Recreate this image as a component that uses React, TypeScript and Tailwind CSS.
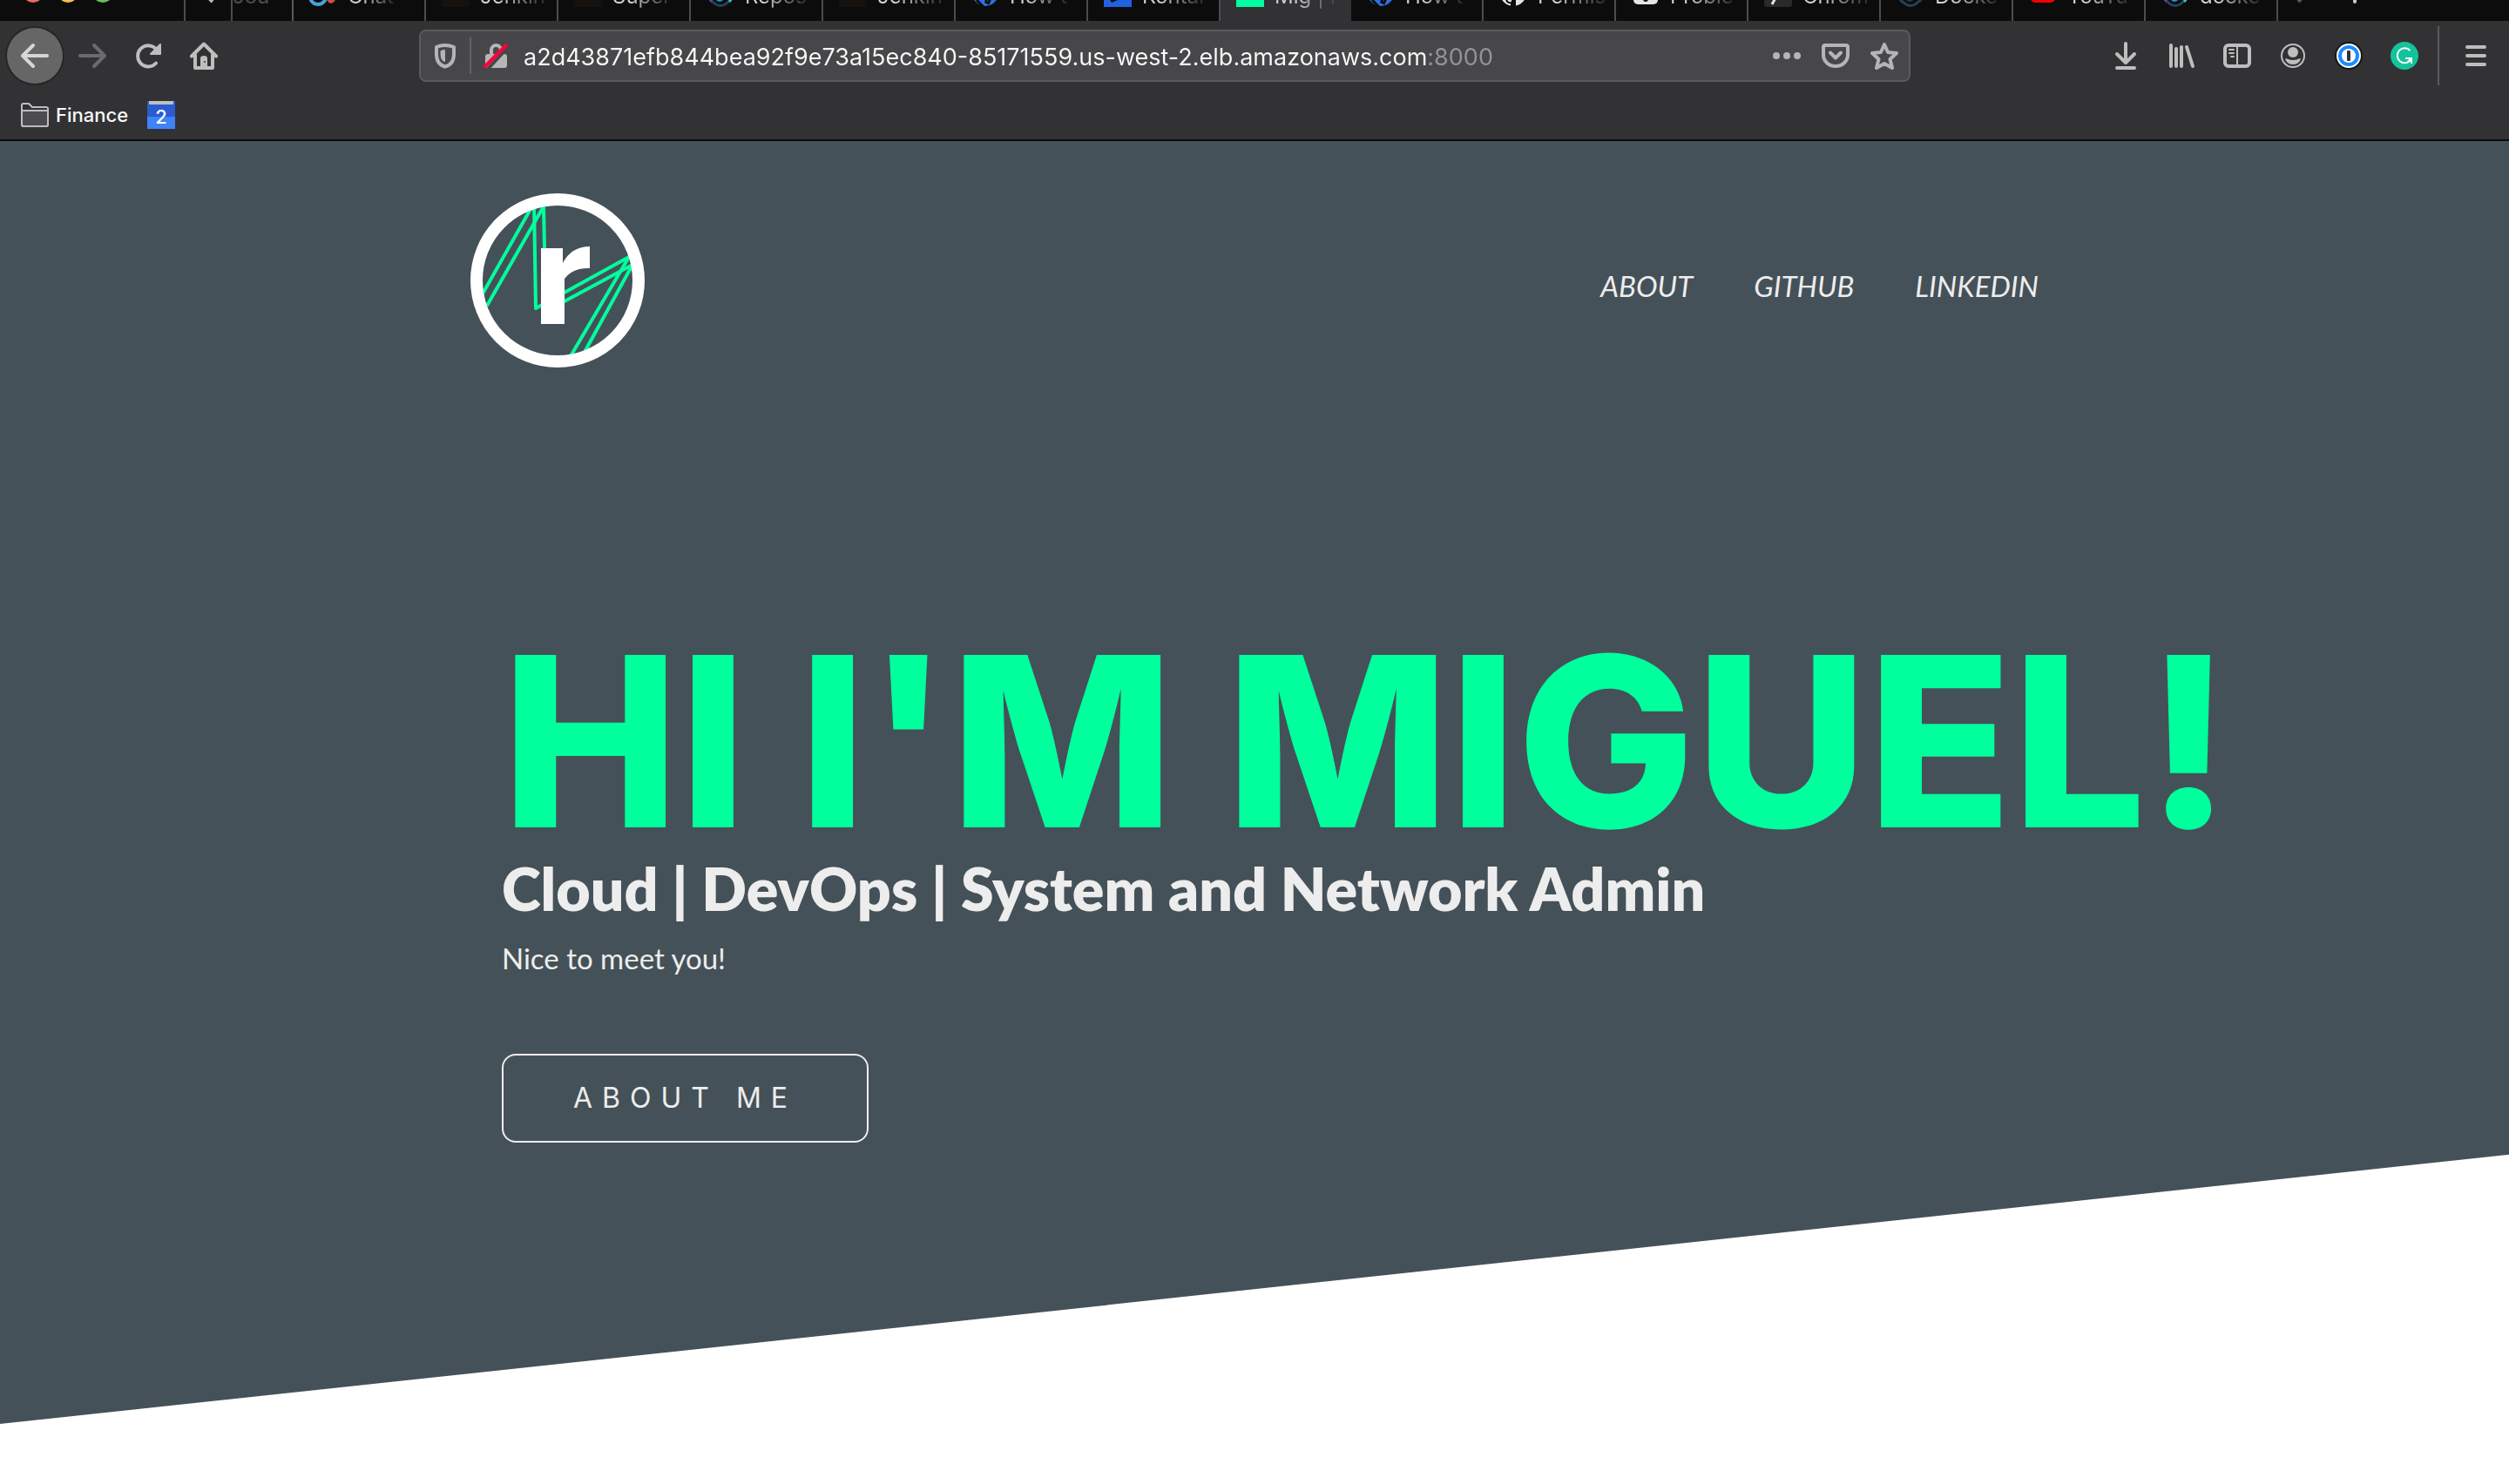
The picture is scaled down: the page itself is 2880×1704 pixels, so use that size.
import type { ReactNode } from "react";

const ring = (a: string, b: string, c: string) => (
  <svg viewBox="0 0 32 32" className="size-8" fill="none" strokeWidth="3">
    <path d="M16 2A14 14 0 0 0 7 26.700" stroke={a} />
    <path d="M6 25Q16 36 26 25" stroke={b} />
    <path d="M16 2A14 14 0 0 1 26 26" stroke={c} />
    <circle cx="15" cy="21" r="5" fill={a === b ? "#1d3a5c" : "#1397d5"} />
  </svg>
);

const kube = (
  <svg viewBox="0 0 32 32" className="size-8">
    <circle cx="16" cy="16" r="15" fill="#2b72e0" />
    <path d="M6 24l8 8M17 20v8M22 22l-3 7" stroke="#0c0c0d" strokeWidth="3" />
  </svg>
);

const jenkins = <span className="block size-8 bg-[#14110f]" />;

type Tab = { title: string; icon: ReactNode; active?: boolean };

const tabs: Tab[] = [
  {
    title: "Chat",
    icon: (
      <svg viewBox="0 0 32 32" className="size-8" fill="none">
        <circle cx="10" cy="20" r="9" stroke="#4aa3d8" strokeWidth="4" />
        <ellipse cx="25" cy="18" rx="6" ry="10" fill="#c94f40" />
      </svg>
    ),
  },
  { title: "Jenkin", icon: jenkins },
  { title: "Super", icon: jenkins },
  { title: "Repos", icon: ring("#6a44a8", "#274055", "#33c9c0") },
  { title: "Jenkin", icon: jenkins },
  { title: "How t", icon: kube },
  {
    title: "Kontai",
    icon: (
      <svg viewBox="0 0 32 32" className="size-8">
        <rect width="32" height="32" fill="#2262e0" />
        <path d="M4 18h26l-21 9z" fill="#0c0c0d" />
      </svg>
    ),
  },
  { title: "Mig | P", icon: <span className="block size-8 bg-[#00ffa2]" />, active: true },
  { title: "How t", icon: kube },
  {
    title: "Permis",
    icon: (
      <svg viewBox="0 0 32 32" className="size-8">
        <circle cx="16" cy="16" r="15" fill="#e4e4e4" />
        <path d="M14 32v-5q-4 1-6-3" stroke="#0c0c0d" strokeWidth="2" fill="none" />
        <path d="M14 20h5v12h-5z" fill="#0c0c0d" />
      </svg>
    ),
  },
  {
    title: "Proble",
    icon: (
      <svg viewBox="0 0 32 32" className="size-8">
        <rect x="2" y="4" width="28" height="25" rx="5" fill="#e4e4e4" />
        <circle cx="16" cy="23" r="3" fill="#0c0c0d" />
      </svg>
    ),
  },
  {
    title: "Chrom",
    icon: (
      <svg viewBox="0 0 32 32" className="size-8">
        <rect width="32" height="32" rx="3" fill="#2a2a2b" />
        <path d="M14 20l-5 9" stroke="#e4e4e4" strokeWidth="3" />
      </svg>
    ),
  },
  { title: "Docke", icon: ring("#274055", "#274055", "#274055") },
  {
    title: "YouTu",
    icon: (
      <svg viewBox="0 0 32 32" className="size-8">
        <rect x="2" y="5" width="28" height="22" rx="5" fill="#f00000" />
      </svg>
    ),
  },
  { title: "docke", icon: ring("#6a44a8", "#274055", "#33c9c0") },
];

function TabStrip() {
  return (
    <div className="flex h-6 items-stretch overflow-hidden bg-[#0c0c0d] text-[24px] leading-6 text-[#c8c8c8]">
      <div className="flex w-[211px] shrink-0 items-end gap-4 pb-[21px] pl-[26px]">
        <button aria-label="Close window" className="size-6 rounded-full bg-[#ee6a5f]" />
        <button aria-label="Minimize window" className="size-6 rounded-full bg-[#f5bf4f]" />
        <button aria-label="Zoom window" className="size-6 rounded-full bg-[#61c554]" />
      </div>
      <button aria-label="Scroll tabs left" className="flex w-14 shrink-0 items-end justify-center border-x-2 border-[#4c4c4e] pb-5">
        <svg viewBox="0 0 24 24" className="size-6" fill="none" stroke="#b8b8b8" strokeWidth="4">
          <path d="M17 2L7 12l10 10" />
        </svg>
      </button>
      <div className="flex w-[70px] shrink-0 items-end border-r-2 border-[#5a5a5c] pb-4 text-[#4c4c4e]">Jou</div>
      {tabs.map((t, i) => (
        <div
          key={i}
          className={
            t.active
              ? "flex w-[150px] shrink-0 items-end gap-3 bg-[#323234] pl-[18px]"
              : "flex w-[152px] shrink-0 items-end gap-3 border-r-2 border-[#4c4c4e] pl-[18px]"
          }
        >
          <span className="shrink-0 pb-4">{t.icon}</span>
          <span className="bg-linear-to-r from-[#d0d0d0] from-30% to-[#2a2a2b] bg-clip-text pb-4 whitespace-nowrap text-transparent">
            {t.title}
          </span>
        </div>
      ))}
      <div className="flex items-end gap-8 pb-5 pl-4">
        <button aria-label="Scroll tabs right">
          <svg viewBox="0 0 24 24" className="size-6" fill="none" stroke="#5a5a5c" strokeWidth="4">
            <path d="M7 2l10 10L7 22" />
          </svg>
        </button>
        <button aria-label="New tab">
          <svg viewBox="0 0 32 24" className="h-6 w-8" stroke="#c8c8c8" strokeWidth="4" strokeLinecap="round">
            <path d="M16 0v22M4 10h24" />
          </svg>
        </button>
      </div>
    </div>
  );
}

function ToolButton({ label, children }: { label: string; children: ReactNode }) {
  return (
    <button aria-label={label} className="flex h-16 w-16 shrink-0 items-center justify-center">
      {children}
    </button>
  );
}

function Icon({ children }: { children: ReactNode }) {
  return (
    <svg viewBox="0 0 32 32" className="size-8 shrink-0" fill="none" stroke="#bebebf" strokeWidth="4" strokeLinecap="round" strokeLinejoin="round">
      {children}
    </svg>
  );
}

function Toolbar() {
  return (
    <div className="flex h-20 items-center pr-1.5 pl-2">
      <button aria-label="Back" className="mr-0.5 flex size-16 shrink-0 items-center justify-center rounded-full bg-[#666667] ring-2 ring-[#262627]">
        <svg viewBox="0 0 32 32" className="size-8" fill="none" stroke="#d6d6d6" strokeWidth="4" strokeLinecap="round" strokeLinejoin="round">
          <path d="M30 16H3M14 4L2 16l12 12" />
        </svg>
      </button>
      <ToolButton label="Forward">
        <svg viewBox="0 0 32 32" className="size-8" fill="none" stroke="#6b6b6d" strokeWidth="4" strokeLinecap="round" strokeLinejoin="round">
          <path d="M2 16h27M18 4l12 12-12 12" />
        </svg>
      </ToolButton>
      <ToolButton label="Reload">
        <Icon>
          <path d="M25 24.500A12 12 0 1 1 26 9.500" />
          <path d="M30 3v11H19z" fill="#bebebf" strokeWidth="2" />
        </Icon>
      </ToolButton>
      <ToolButton label="Home">
        <Icon>
          <path d="M2 16.500L16 2.500l14 14M6 15v15h20V15" />
          <path d="M13 29V19q0-2 3-2t3 2v10" fill="#bebebf" strokeWidth="2" />
          <circle cx="17" cy="23" r="1" fill="#323234" stroke="none" />
        </Icon>
      </ToolButton>
      <div className="w-[215px] shrink-0" />
      <div className="flex h-[60px] flex-1 items-center rounded-lg border-2 border-[#5a5a5c] bg-[#474749]">
        <button aria-label="Tracking protection" className="ml-3 shrink-0">
          <svg viewBox="0 0 32 32" className="size-8" fill="none" stroke="#b5b5b7" strokeWidth="4" strokeLinejoin="round">
            <path d="M16 4q5 0 10 2v8c0 8-4 13-10 14.500C10 27 6 22 6 14V6q5-2 10-2z" />
            <path d="M15 10v12c-3-2-3.500-4-3.500-11z" fill="#b5b5b7" strokeWidth="2" />
          </svg>
        </button>
        <div className="ml-3 h-[42px] w-0.5 shrink-0 bg-[#5c646b]" />
        <button aria-label="Connection is not secure" className="ml-3 shrink-0">
          <svg viewBox="0 0 32 32" className="size-8" fill="none">
            <path d="M11 15V9.500a5.500 5.500 0 0 1 11 0V15" stroke="#b5b5b7" strokeWidth="4" />
            <rect x="4" y="14" width="25" height="16" rx="3" fill="#b5b5b7" />
            <path d="M7 31L32 4" stroke="#474749" strokeWidth="4" />
            <path d="M4 28L28 4" stroke="#ff0039" strokeWidth="4" strokeLinecap="round" />
          </svg>
        </button>
        <input
          aria-label="Address"
          defaultValue="a2d43871efb844bea92f9e73a15ec840-85171559.us-west-2.elb.amazonaws.com:8000"
          className="ml-4 h-14 min-w-0 flex-1 bg-[linear-gradient(90deg,#f9f9fa_1037px,#949496_1037px)] bg-clip-text pt-0.5 text-[27px] text-transparent outline-none"
        />
        <button aria-label="Page actions" className="flex w-14 shrink-0 justify-center">
          <svg viewBox="0 0 32 32" className="size-8" fill="#b5b5b7">
            <circle cx="4" cy="16" r="4" />
            <circle cx="16" cy="16" r="4" />
            <circle cx="28" cy="16" r="4" />
          </svg>
        </button>
        <button aria-label="Save to Pocket" className="flex w-14 shrink-0 justify-center">
          <svg viewBox="0 0 32 32" className="size-8" fill="none" stroke="#b5b5b7" strokeWidth="4" strokeLinecap="round" strokeLinejoin="round">
            <path d="M4 4h24q2 0 2 2v9a14 13 0 0 1-28 0V6q0-2 2-2z" />
            <path d="M10 12.500l6 6 6-6" />
          </svg>
        </button>
        <button aria-label="Bookmark this page" className="flex w-14 shrink-0 justify-center">
          <svg viewBox="0 0 32 32" className="size-8" fill="none" stroke="#b5b5b7" strokeWidth="4" strokeLinejoin="round">
            <path d="M16 3l4 9 10 1-7.500 7L25 30l-9-5-9 5 2.500-10L2 13l10-1z" />
          </svg>
        </button>
      </div>
      <div className="w-[215px] shrink-0" />
      <ToolButton label="Downloads">
        <Icon>
          <path d="M16 2v22M6 14l10 10 10-10M6 30h20" />
        </Icon>
      </ToolButton>
      <ToolButton label="Library">
        <Icon>
          <path d="M4 4v24M10 8v20M16 6v22M22 6l7 22" />
        </Icon>
      </ToolButton>
      <ToolButton label="Sidebars">
        <Icon>
          <rect x="2" y="4" width="28" height="24" rx="4" />
          <path d="M16 4v24M7 9h5M7 13h5M9 17h3" strokeWidth="2" />
        </Icon>
      </ToolButton>
      <ToolButton label="Account">
        <Icon>
          <circle cx="16" cy="16" r="13" strokeWidth="2" />
          <circle cx="16" cy="12" r="6" fill="#bebebf" stroke="none" />
          <path d="M8 19q8 4 16 0 1 0 0.500 2Q22 26 16 26T7.500 21Q7 19 8 19z" fill="#bebebf" stroke="none" />
        </Icon>
      </ToolButton>
      <ToolButton label="1Password">
        <svg viewBox="0 0 32 32" className="size-8">
          <circle cx="16" cy="16" r="16" fill="#161616" />
          <circle cx="16" cy="16" r="14" fill="#fff" />
          <circle cx="16" cy="16" r="12" fill="#1a8cff" />
          <circle cx="16" cy="16" r="8" fill="#fff" />
          <rect x="14" y="10" width="4" height="12" rx="1" fill="#323234" />
        </svg>
      </ToolButton>
      <ToolButton label="Grammarly">
        <svg viewBox="0 0 32 32" className="size-8" fill="none" stroke="#fff" strokeWidth="2">
          <circle cx="16" cy="16" r="16" fill="#15c39a" stroke="none" />
          <path d="M22.500 10A8.500 8.500 0 1 0 23 21M17 19h7v6M24 19l-5 5" />
        </svg>
      </ToolButton>
      <div className="mr-2.5 ml-1.5 h-[68px] w-0.5 shrink-0 bg-[#5a5a5c]" />
      <ToolButton label="Menu">
        <Icon>
          <path d="M6 6h20M6 16h20M6 26h20" />
        </Icon>
      </ToolButton>
    </div>
  );
}

function Bookmarks() {
  return (
    <div className="box-content flex h-14 items-center border-b-2 border-[#0c0c0d] pl-6 text-[22px] font-medium text-[#f9f9fa]">
      <button className="flex items-center gap-2">
        <svg viewBox="0 0 32 32" className="size-8" fill="none" stroke="#bebebf" strokeWidth="2" strokeLinejoin="round">
          <path d="M1 27V5q0-2 2-2h6l4 4h16q2 0 2 2v18q0 2-2 2H3q-2 0-2-2z" />
          <path d="M1 11h30v16q0 2-2 2H3q-2 0-2-2z" fill="#4c4c4e" />
        </svg>
        Finance
      </button>
      <button aria-label="Calendar" className="ml-[22px] flex size-8 flex-col items-center bg-linear-to-b from-[#2a5bd0] from-55% to-[#3f83f8] to-55% text-[22px] leading-7 text-white">
        <span className="h-1 w-7 shrink-0 bg-[#c0c0c2]" />
        2
      </button>
    </div>
  );
}

function Logo() {
  return (
    <svg viewBox="0 0 200 200" className="size-[200px]" fill="none" role="img" aria-label="Logo">
      <g stroke="#00ff9d" strokeWidth="4" strokeLinejoin="round">
        <path d="M13 117L73 11L75 132L182 73L112 192" />
        <path d="M19 129L84 15L85 64" />
        <path d="M106 125L186 82L130 184" />
      </g>
      <circle cx="100" cy="100" r="93" stroke="#fff" strokeWidth="14" />
      <path d="M81 63h25v17q10-19 31-19v25q-19-1-29 12v52H81z" fill="#fff" />
    </svg>
  );
}

export default function App() {
  return (
    <div className="min-h-screen bg-white font-['Inter',sans-serif]">
      <header className="bg-[#323234]">
        <TabStrip />
        <Toolbar />
        <Bookmarks />
      </header>
      <main className="bg-[#455158] pt-[60px] pb-[323px] font-['Lato',sans-serif] text-[#ededed] [clip-path:polygon(0_0,100%_0,100%_79%,0_100%)]">
        <div className="mx-auto w-5/8">
          <nav className="flex items-center justify-between">
            <a href="#home">
              <Logo />
            </a>
            <div className="flex gap-[70px] pt-3 text-[33px] leading-10 italic">
              <a href="#about">ABOUT</a>
              <a href="#github">GITHUB</a>
              <a href="#linkedin">LINKEDIN</a>
            </div>
          </nav>
          <section className="pt-[300px] pl-9">
            <h1 className="font-['Inter',sans-serif] text-[272px] leading-[258px] font-extrabold whitespace-nowrap text-[#00ff9d]">
              HI I'M MIGUEL!
            </h1>
            <h2 className="text-[68px] leading-20 font-extrabold">Cloud | DevOps | System and Network Admin</h2>
            <p className="mt-4 text-[33px] leading-12">Nice to meet you!</p>
            <a
              href="#about"
              className="mt-[86px] inline-flex h-[102px] items-center rounded-2xl border-2 border-[#ededed] px-20 font-['Inter',sans-serif] text-[32px] leading-10 tracking-[11px]"
            >
              ABOUT ME
            </a>
          </section>
        </div>
      </main>
    </div>
  );
}
